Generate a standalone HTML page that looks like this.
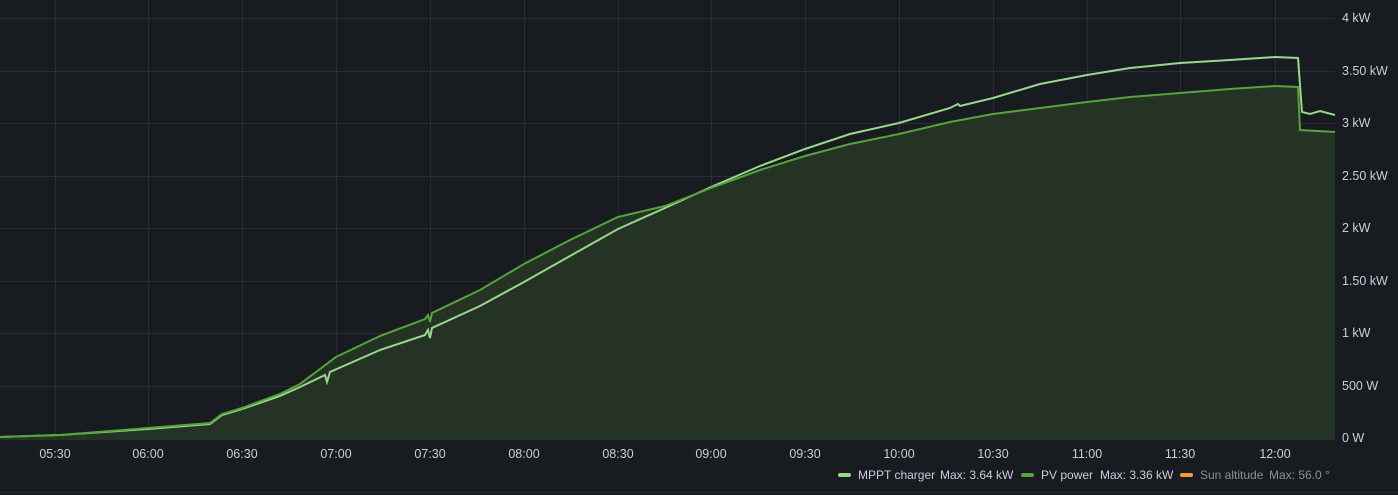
<!DOCTYPE html>
<html><head><style>
html,body{margin:0;padding:0;background:#181b1f;width:1398px;height:495px;overflow:hidden;font-family:"Liberation Sans",sans-serif;}
svg{position:absolute;left:0;top:0}
</style></head><body>
<svg width="1398" height="495" xmlns="http://www.w3.org/2000/svg">
<rect width="1398" height="495" fill="#181b1f"/>
<g stroke="#ccccdc" stroke-opacity="0.1" stroke-width="1">
<line x1="0" y1="18.5" x2="1335" y2="18.5"/><line x1="0" y1="71.5" x2="1335" y2="71.5"/><line x1="0" y1="123.5" x2="1335" y2="123.5"/><line x1="0" y1="176.5" x2="1335" y2="176.5"/><line x1="0" y1="228.5" x2="1335" y2="228.5"/><line x1="0" y1="281.5" x2="1335" y2="281.5"/><line x1="0" y1="333.5" x2="1335" y2="333.5"/><line x1="0" y1="386.5" x2="1335" y2="386.5"/><line x1="0" y1="438.5" x2="1335" y2="438.5"/>
<line x1="55.5" y1="0" x2="55.5" y2="440"/><line x1="148.5" y1="0" x2="148.5" y2="440"/><line x1="242.5" y1="0" x2="242.5" y2="440"/><line x1="336.5" y1="0" x2="336.5" y2="440"/><line x1="430.5" y1="0" x2="430.5" y2="440"/><line x1="524.5" y1="0" x2="524.5" y2="440"/><line x1="618.5" y1="0" x2="618.5" y2="440"/><line x1="711.5" y1="0" x2="711.5" y2="440"/><line x1="805.5" y1="0" x2="805.5" y2="440"/><line x1="899.5" y1="0" x2="899.5" y2="440"/><line x1="993.5" y1="0" x2="993.5" y2="440"/><line x1="1087.5" y1="0" x2="1087.5" y2="440"/><line x1="1180.5" y1="0" x2="1180.5" y2="440"/><line x1="1275.5" y1="0" x2="1275.5" y2="440"/>
</g>
<path d="M0,437 L60,435 L148,428 L210,423 L222,414 L242,408 L280,394 L300,384 L336,357 L380,336 L425,319 L428,315 L430,322 L432,313 L480,290 L524,264 L570,240 L618,217 L665,206 L711,188 L760,170 L805,156 L850,144 L899,134 L950,122 L993,114 L1040,108 L1087,102 L1130,97 L1180,93 L1230,89 L1275,86 L1298,87 L1300,130 L1335,132 L1335,440 L0,440 Z" fill="#243324"/>
<polyline fill="none" stroke="#96d98d" stroke-width="2" points="0,437 60,435 148,429 210,424 222,415 242,409 280,396 300,387 325,375 327,382 330,372 380,350 425,335 428,330 430,338 432,328 480,306 524,282 570,256 618,229 665,208 711,187 760,166 805,149 850,134 899,123 950,108 958,104 960,106 993,98 1040,84 1087,75 1130,68 1180,63 1230,60 1275,57 1298,58 1302,112 1310,114 1320,111 1335,115"/>
<polyline fill="none" stroke="#56a33e" stroke-width="2" points="0,437 60,435 148,428 210,423 222,414 242,408 280,394 300,384 336,357 380,336 425,319 428,315 430,322 432,313 480,290 524,264 570,240 618,217 665,206 711,188 760,170 805,156 850,144 899,134 950,122 993,114 1040,108 1087,102 1130,97 1180,93 1230,89 1275,86 1298,87 1300,130 1335,132"/>
<g fill="#c7d0d9" font-size="12.5">
<text x="1342" y="22">4 kW</text><text x="1342" y="75">3.50 kW</text><text x="1342" y="127">3 kW</text><text x="1342" y="180">2.50 kW</text><text x="1342" y="232">2 kW</text><text x="1342" y="285">1.50 kW</text><text x="1342" y="337">1 kW</text><text x="1342" y="390">500 W</text><text x="1342" y="442">0 W</text>
</g>
<g fill="#c7d0d9" font-size="12.5" text-anchor="middle">
<text x="55" y="458">05:30</text><text x="148" y="458">06:00</text><text x="242" y="458">06:30</text><text x="336" y="458">07:00</text><text x="430" y="458">07:30</text><text x="524" y="458">08:00</text><text x="618" y="458">08:30</text><text x="711" y="458">09:00</text><text x="805" y="458">09:30</text><text x="899" y="458">10:00</text><text x="993" y="458">10:30</text><text x="1087" y="458">11:00</text><text x="1180" y="458">11:30</text><text x="1275" y="458">12:00</text>
</g>
<g font-size="12">
<rect x="838" y="473" width="13" height="4" rx="2" fill="#96d98d"/>
<text x="858" y="479" fill="#ccccdc">MPPT charger</text>
<text x="940" y="479" fill="#ccccdc">Max: 3.64 kW</text>
<rect x="1021" y="473" width="13" height="4" rx="2" fill="#56a33e"/>
<text x="1041" y="479" fill="#ccccdc">PV power</text>
<text x="1100" y="479" fill="#ccccdc">Max: 3.36 kW</text>
<rect x="1180" y="473" width="13" height="4" rx="2" fill="#ff9830"/>
<text x="1200" y="479" fill="#8e8e99">Sun altitude</text>
<text x="1269" y="479" fill="#8e8e99">Max: 56.0 °</text>
</g>
<line x1="0" y1="492.5" x2="1398" y2="492.5" stroke="#25282d"/>
</svg>
</body></html>
